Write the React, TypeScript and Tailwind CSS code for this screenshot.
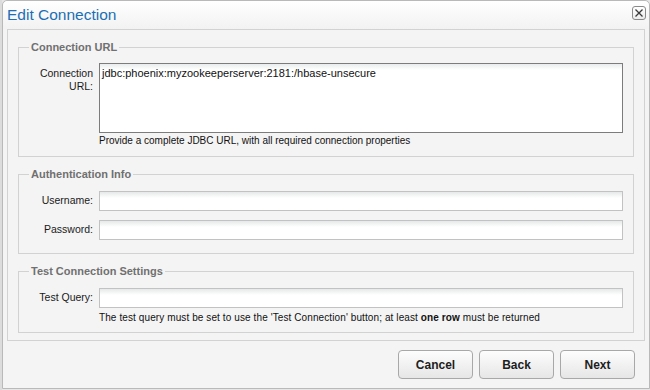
import React from 'react';

const font = { fontFamily: '"Liberation Sans", Arial, sans-serif' };

const inputClass =
  'h-[20px] w-full border border-[#c2c2c2] bg-[linear-gradient(to_bottom,#e6e9e9,#ffffff_6px)] px-[2px] text-[11px] text-[#111] outline-none';

const Section: React.FC<{ title: string; className?: string; children: React.ReactNode }> = ({
  title,
  className = '',
  children,
}) => (
  <fieldset className={`border border-[#d2d2d2] px-[10px] ${className}`}>
    <legend className="px-[2px] text-[11px] font-bold leading-[14px] text-[#707070]">{title}</legend>
    {children}
  </fieldset>
);

const FooterButton: React.FC<{ label: string }> = ({ label }) => (
  <button className="h-[29px] w-[75px] rounded-[4px] border border-[#a8a8a8] bg-[linear-gradient(to_bottom,#fdfdfd,#e6e6e6)] text-[12px] font-bold text-[#1e1e1e]">
    {label}
  </button>
);

const App: React.FC = () => {
  return (
    <div className="flex h-[390px] w-[650px] overflow-hidden bg-[#e6e6e6]" style={font}>
      {/* Page behind the dialog */}
      <div className="w-[2px] shrink-0 bg-[#dcdcdc]"></div>

      {/* Dialog */}
      <div className="flex h-[389px] w-[648px] shrink-0 flex-col rounded-t-[5px] border border-[#b9b9b9] bg-[#f4f4f4]">
        {/* Title bar */}
        <div className="flex h-[28px] shrink-0 items-start justify-between rounded-t-[5px] bg-[linear-gradient(to_bottom,#ffffff,#f2f2f2)] pl-[4px] pr-[3px]">
          <span className="pt-[4px] text-[15.5px] leading-[20px] text-[#1b6fb5]">Edit Connection</span>
          <button className="mt-[5px] flex h-[14px] w-[14px] items-center justify-center rounded-[3px] border border-[#8a8a8a] bg-[linear-gradient(to_bottom,#ffffff,#ececec)]">
            <svg width="8" height="8" viewBox="0 0 8 8">
              <path d="M0.5 0.5 L7.5 7.5 M7.5 0.5 L0.5 7.5" stroke="#3a3a3a" strokeWidth="1.3" />
            </svg>
          </button>
        </div>

        {/* Body panel */}
        <div className="mx-[4px] flex flex-col gap-[10px] border border-[#d2d2d2] px-[10px] pb-[7px] pt-[10px]">
          <Section title="Connection URL" className="pb-[9px]">
            <div className="flex gap-[6px] pt-[9px]">
              <div className="w-[64px] shrink-0 pt-[4px] text-right text-[10.5px] leading-[13px] text-[#1a1a1a]">
                Connection
                <br />
                URL:
              </div>
              <div className="flex flex-1 flex-col">
                <textarea
                  className="h-[70px] w-full resize-none border border-[#7c7c7c] bg-[linear-gradient(to_bottom,#e9eded,#ffffff_6px)] px-[2px] pt-[3px] text-[11px] leading-[13px] text-[#111] outline-none"
                  defaultValue="jdbc:phoenix:myzookeeperserver:2181:/hbase-unsecure"
                />
                <p className="mt-[2px] text-[10px] leading-[12px] text-[#111]">
                  Provide a complete JDBC URL, with all required connection properties
                </p>
              </div>
            </div>
          </Section>

          <Section title="Authentication Info" className="pb-[13px]">
            <div className="flex flex-col gap-[9px] pt-[10px]">
              <div className="flex items-center gap-[6px]">
                <label className="w-[64px] shrink-0 text-right text-[10.5px] text-[#1a1a1a]">Username:</label>
                <input className={inputClass} />
              </div>
              <div className="flex items-center gap-[6px]">
                <label className="w-[64px] shrink-0 text-right text-[10.5px] text-[#1a1a1a]">Password:</label>
                <input type="password" className={inputClass} />
              </div>
            </div>
          </Section>

          <Section title="Test Connection Settings" className="pb-[8px]">
            <div className="flex flex-col pt-[10px]">
              <div className="flex items-center gap-[6px]">
                <label className="w-[64px] shrink-0 text-right text-[10.5px] text-[#1a1a1a]">Test Query:</label>
                <input className={inputClass} />
              </div>
              <p className="ml-[70px] mt-[4px] text-[10px] tracking-[0.1px] leading-[12px] text-[#111]">
                The test query must be set to use the 'Test Connection' button; at least <b>one row</b> must be
                returned
              </p>
            </div>
          </Section>
        </div>

        {/* Footer */}
        <div className="flex justify-end gap-[6px] pr-[14px] pt-[9px]">
          <FooterButton label="Cancel" />
          <FooterButton label="Back" />
          <FooterButton label="Next" />
        </div>
      </div>
    </div>
  );
};

export default App;
